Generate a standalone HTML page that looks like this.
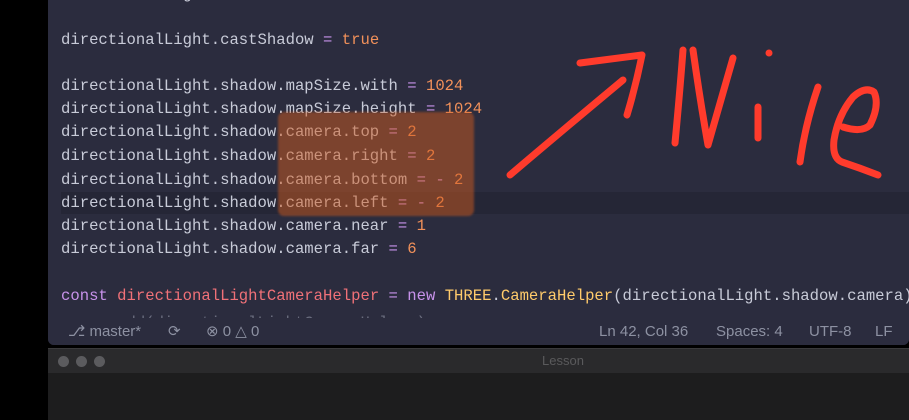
<!DOCTYPE html>
<html><head><style>
body{margin:0;width:909px;height:420px;background:#000;overflow:hidden;position:relative;font-family:"Liberation Sans",sans-serif}
#ed{position:absolute;left:48px;top:0;width:861px;height:345px;background:#2b2c3e;border-radius:0 0 6px 6px;overflow:hidden}
.l{position:absolute;left:13px;font-family:"Liberation Mono",monospace;font-size:15.6px;color:#c8cbd8;white-space:pre;line-height:20px}
.o{color:#f2915a}.p{color:#c792ea}.r{color:#f07178}.y{color:#ffcb6b}
#hl{position:absolute;left:13px;right:0;top:192px;height:22px;background:#252636}
#mk{position:absolute;left:230px;top:112px;width:196px;height:104px;background:rgba(205,90,30,.5);border-radius:6px;filter:blur(1px)}
#sb{position:absolute;left:0;right:0;top:318px;height:27px;background:#2b2c3e;color:#8d91a2;font-size:15px;line-height:27px}
#sb span{position:absolute}
#bar{position:absolute;left:48px;top:348px;width:861px;height:24px;background:#2a2a2c;border-top:1px solid #3a3a3c}
.d{position:absolute;top:7px;width:11px;height:11px;border-radius:50%;background:#5b5b5e}
#low{position:absolute;left:48px;top:373px;width:861px;height:47px;background:#1d1d1e}
</style></head><body>
<div id="ed">
<div id="hl"></div>
<div class="l" style="top:-16px">directionalLight.shadow.camera</div>
<div class="l" style="top:30px">directionalLight.castShadow <span class="p">=</span> <span class="o">true</span></div>
<div class="l" style="top:76px">directionalLight.shadow.mapSize.with <span class="p">=</span> <span class="o">1024</span></div>
<div class="l" style="top:99px">directionalLight.shadow.mapSize.height <span class="p">=</span> <span class="o">1024</span></div>
<div class="l" style="top:122px">directionalLight.shadow.camera.top <span class="p">=</span> <span class="o">2</span></div>
<div class="l" style="top:146px">directionalLight.shadow.camera.right <span class="p">=</span> <span class="o">2</span></div>
<div class="l" style="top:170px">directionalLight.shadow.camera.bottom <span class="p">=</span> <span class="p">-</span> <span class="o">2</span></div>
<div class="l" style="top:193px">directionalLight.shadow.camera.left <span class="p">=</span> <span class="p">-</span> <span class="o">2</span></div>
<div class="l" style="top:216px">directionalLight.shadow.camera.near <span class="p">=</span> <span class="o">1</span></div>
<div class="l" style="top:239px">directionalLight.shadow.camera.far <span class="p">=</span> <span class="o">6</span></div>
<div class="l" style="top:286px"><span class="p">const</span> <span class="r">directionalLightCameraHelper</span> <span class="p">=</span> <span class="p">new</span> <span class="y">THREE</span>.<span class="y">CameraHelper</span>(directionalLight.shadow.camera)</div>
<div class="l" style="top:313px;color:#6a6d7e">scene.add(directionalLightCameraHelper)</div>
<div id="mk"></div>
<div id="sb">
<span style="left:20px">&#x2387; master*</span>
<span style="left:120px">&#x27F3;</span>
<span style="left:158px">&#x2297; 0 &#x25B3; 0</span>
<span style="left:551px">Ln 42, Col 36</span>
<span style="left:668px">Spaces: 4</span>
<span style="left:761px">UTF-8</span>
<span style="left:827px">LF</span>
</div>
</div>
<div id="bar"><div class="d" style="left:10px"></div><div class="d" style="left:28px"></div><div class="d" style="left:46px"></div>
<div style="position:absolute;left:494px;color:#5a5a5c;font-size:13px;line-height:24px">Lesson</div></div>
<div id="low"></div>
<svg width="909" height="420" style="position:absolute;left:0;top:0" fill="none" stroke="#ff3b2c" stroke-width="7" stroke-linecap="round" stroke-linejoin="round">
<path d="M510 175 Q557 135 623 80"/>
<path d="M580 63 L642 55 Q636 85 627 115"/>
<path d="M675 143 Q680 90 683 50"/>
<path d="M693 50 Q700 100 708 145 L733 58"/>
<path d="M769 53 L769 53"/>
<path d="M758 107 L758 138"/>
<path d="M818 87 Q805 125 800 162"/>
<path d="M843 127 Q862 133 870 125 Q880 105 874 92 Q865 86 853 97 Q838 115 834 140 Q832 158 842 162 Q860 168 878 175"/>
</svg>
</body></html>
